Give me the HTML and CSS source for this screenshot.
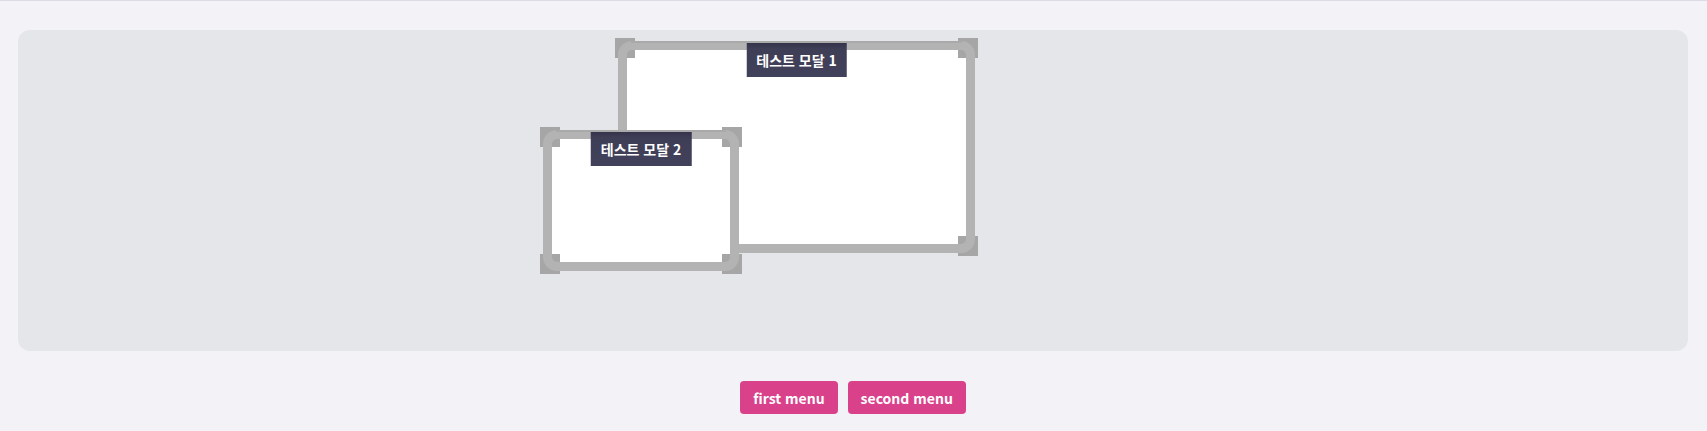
FILE: index.html
```html
<!DOCTYPE html>
<html lang="ko">
<head>
<meta charset="utf-8">
<title>Modals</title>
<link rel="stylesheet" href="styles.css">
</head>
<body>
<div class="page">
  <div class="canvas">
    <div class="window w1">
      <span class="handle tl"></span>
      <span class="handle tr"></span>
      <span class="handle bl"></span>
      <span class="handle br"></span>
      <div class="frame"></div>
      <div class="title">테스트 모달 1</div>
    </div>
    <div class="window w2">
      <span class="handle tl"></span>
      <span class="handle tr"></span>
      <span class="handle bl"></span>
      <span class="handle br"></span>
      <div class="frame"></div>
      <div class="title">테스트 모달 2</div>
    </div>
  </div>
  <nav class="menu">
    <button class="menu-btn">first menu</button>
    <button class="menu-btn">second menu</button>
  </nav>
</div>
</body>
</html>
```

FILE: styles.css
```css
html, body {
  margin: 0;
  padding: 0;
  background: #f2f2f7;
  font-family: "Noto Sans CJK KR", "Noto Sans", sans-serif;
}

.page {
  border-top: 1px solid #dcdce8;
  padding: 29px 19px 0 18px;
  height: 430px;
  box-sizing: border-box;
}

.canvas {
  position: relative;
  height: 321px;
  background: #e5e6ea;
  border-radius: 12px;
}

.window {
  position: absolute;
  background: #ffffff;
  border-radius: 14px;
}

.w1 {
  left: 600px;
  top: 11px;
  width: 357px;
  height: 212px;
  z-index: 1;
}

.w2 {
  left: 525px;
  top: 100px;
  width: 196px;
  height: 141px;
  z-index: 2;
}

.handle {
  position: absolute;
  width: 20px;
  height: 20px;
  background: #a6a6a6;
}

.handle.tl { left: -3px; top: -3px; }
.handle.tr { right: -3px; top: -3px; }
.handle.bl { left: -3px; bottom: -3px; }
.handle.br { right: -3px; bottom: -3px; }

.frame {
  position: absolute;
  inset: 0;
  border: 9px solid #b3b3b3;
  border-radius: 14px;
}

.frame::before {
  content: "";
  position: absolute;
  top: -9px;
  left: 4px;
  right: 4px;
  height: 2px;
  background: #a9a9a9;
}

.title {
  position: absolute;
  top: 2px;
  left: 50%;
  transform: translateX(-50%);
  height: 34px;
  line-height: 34px;
  padding: 0 10px;
  white-space: nowrap;
  color: #ffffff;
  font-size: 14px;
  font-weight: 700;
  background: linear-gradient(#34334a 0, #3f3e57 6px, #42415b 100%);
}

.menu {
  display: flex;
  justify-content: center;
  gap: 10px;
  margin-top: 30px;
}

.menu-btn {
  height: 33px;
  padding: 0 13px;
  border: none;
  border-radius: 4px;
  background: #d9418b;
  color: #ffffff;
  font-family: "Noto Sans CJK KR", "Noto Sans", sans-serif;
  font-size: 14px;
  font-weight: 700;
  cursor: pointer;
}
```
